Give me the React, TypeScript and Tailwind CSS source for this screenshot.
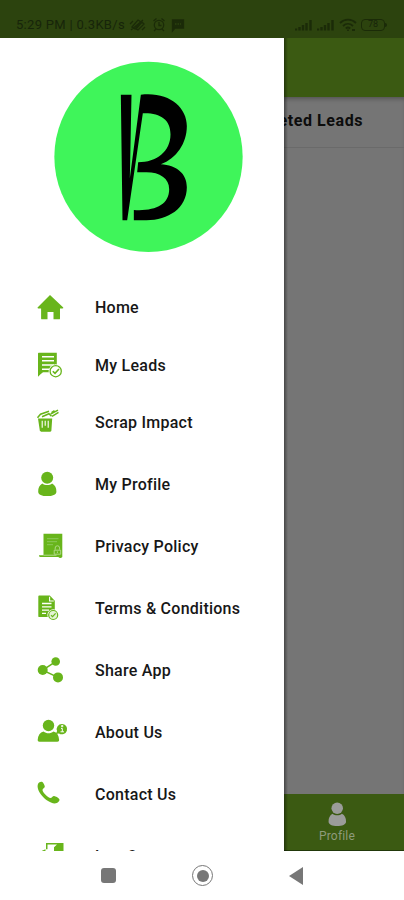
import type { ReactNode } from "react";

interface MenuItem {
  label: string;
  row: string;
  icon: ReactNode;
}

function Glyph({ children }: { children: ReactNode }) {
  return (
    <svg viewBox="0 0.8 40 40" className="size-10 shrink-0" fill="#68b51b">
      {children}
    </svg>
  );
}

const menu: MenuItem[] = [
  {
    label: "Home",
    row: "h-[58px]",
    icon: (
      <Glyph>
        <path d="M20 7.8 33 20c.6.8.2 1.2-.5 1.2H30v10c0 .6-.3.9-.9.9h-5.6v-7.4h-6v7.4H12c-.6 0-.9-.3-.9-.9v-10H8.400c-.9 0-1.200-.6-.6-1.200Z" />
      </Glyph>
    ),
  },
  {
    label: "My Leads",
    row: "h-[57px]",
    icon: (
      <Glyph>
        <path d="M9 7.500h17.800V27H13l-2.500 2-2.500 2.500V8.500c0-.6.4-1 1-1Z" />
        <path d="M12 11.500h12M12 15.500h12M12 19.700h12M12 24h7" stroke="#fff" strokeWidth="1.500" />
        <circle cx="25.700" cy="26" r="7" fill="#fff" />
        <circle cx="25.700" cy="26" r="5.600" fill="#fff" stroke="#68b51b" strokeWidth="1.300" />
        <path d="m22.800 26 2.200 2.200 4-4.400" fill="none" stroke="#68b51b" strokeWidth="1.600" />
      </Glyph>
    ),
  },
  {
    label: "Scrap Impact",
    row: "h-[58px] mb-0.5",
    icon: (
      <Glyph>
        <path d="M8 16.200h14.200l-.8 12.200c-.1.800-.6 1.200-1.300 1.200h-9c-.8 0-1.200-.4-1.300-1.200Z" />
        <path d="M12.200 18.500v7M15.200 18.500v5M18.200 18.500v7" stroke="#fff" strokeWidth="1.100" />
        <path d="m7.500 15.500 3-3.500 8.500-3M12 14.500l7-3 2.500 2.500" fill="none" stroke="#68b51b" strokeWidth="1.500" />
        <path d="m20.500 12 7.500-4M22 14.200l6.500-4M21.500 10.500l3-2" stroke="#68b51b" strokeWidth="1.500" />
      </Glyph>
    ),
  },
  {
    label: "My Profile",
    row: "h-[62px]",
    icon: (
      <Glyph>
        <circle cx="17.200" cy="13.500" r="6" />
        <path d="M12.300 19.300c2.600 2.100 7.200 2.100 9.800 0 3 1.500 4.400 4.500 4.300 8.200 0 3-4 4.400-9.200 4.400S8.200 30.500 8.200 27.500c-.1-3.700 1.300-6.700 4.100-8.200Z" />
      </Glyph>
    ),
  },
  {
    label: "Privacy Policy",
    row: "h-[62px]",
    icon: (
      <Glyph>
        <path d="M13.500 7.500h18.800v23.300c-1 1.200-3 1.200-4 0H10.500c-1 0-1.500-.6-1.500-1.800h4.500Z" />
        <path d="M17 12.500h11.500M17 15.500h10M17 18.500h6" stroke="#8dc95a" strokeWidth="1" />
        <path d="M13.500 29h13" stroke="#c5e5a6" strokeWidth=".8" />
        <path d="M25.200 23.500v-1.700a2.200 2.200 0 0 1 4.400 0v1.700M24.200 24h6.500v4h-6.500ZM27.400 25.200v1.600" fill="none" stroke="#b4db8f" strokeWidth=".9" />
      </Glyph>
    ),
  },
  {
    label: "Terms & Conditions",
    row: "h-[62px]",
    icon: (
      <Glyph>
        <path d="M9.500 7.300h10.300l5 5.200v16.400H9.500c-.8 0-1.200-.4-1.200-1.200V8.500c0-.8.400-1.200 1.200-1.200Z" />
        <path d="M19.600 8.500v4.300h4.200" fill="none" stroke="#fff" strokeWidth="1.100" />
        <path d="M12 15.300h9.500M12 18.600h9.500M12 22h7M12 25.200h4" stroke="#fff" strokeWidth="1.300" />
        <circle cx="23.200" cy="26.800" r="5.800" fill="#fff" />
        <circle cx="23.200" cy="26.800" r="4.500" fill="#e3f3d4" stroke="#68b51b" strokeWidth="1.200" />
        <path d="m21 27 1.600 1.500 3-3.300" fill="none" stroke="#68b51b" strokeWidth="1.200" />
      </Glyph>
    ),
  },
  {
    label: "Share App",
    row: "h-[62px]",
    icon: (
      <Glyph>
        <path d="M25.700 11.500 12.700 20 28 27.200" fill="none" stroke="#68b51b" strokeWidth="1.600" />
        <circle cx="25.700" cy="11.300" r="4.300" />
        <circle cx="12.700" cy="19.800" r="5" />
        <circle cx="28" cy="27.200" r="5" />
      </Glyph>
    ),
  },
  {
    label: "About Us",
    row: "h-[62px]",
    icon: (
      <Glyph>
        <circle cx="18.500" cy="13.300" r="5.700" />
        <path d="M13.500 19.300c3 2.400 7 2.400 10 0 3.500 1 5.300 3.700 5.600 8.200.1 1.300-.5 2-1.800 2H9.500c-1.300 0-1.900-.7-1.800-2 .3-4.500 2.300-7.200 5.800-8.200Z" />
        <path d="M32 11.700a5.200 5.200 0 1 1-3 9.500l-3.200.7 1.300-3A5.200 5.200 0 0 1 32 11.700Z" />
        <path d="M31 16.200h1.300v3.300M30.500 19.600h3.500M31.600 13.300h1.200v1.200h-1.200Z" fill="none" stroke="#fff" strokeWidth="1" />
      </Glyph>
    ),
  },
  {
    label: "Contact Us",
    row: "h-[62px]",
    icon: (
      <Glyph>
        <path d="M8.800 8.600c1-.9 2.700-1.400 3.600-.8.900.7 2.200 3 2.400 4.600.1 1.300-2.300 2-2.300 3.400 0 2.200 5.500 7.900 8 8 1.400 0 2.200-2.200 3.600-2 1.700.2 4.100 1.800 5.100 2.900 1 1.300-.8 3.400-2.400 4.100-2.300 1.100-6 .1-10-2.700-4.500-3.200-8-8-8.900-11.700-.6-2.400-.3-4.700.9-5.800Z" />
      </Glyph>
    ),
  },
  {
    label: "Log Out",
    row: "h-[62px]",
    icon: (
      <Glyph>
        <path d="M16 6.800h17.500v22.700h-8.500v2h-1V11l3-2.700h-9.500V13H16Z" />
        <path d="M12 14.500 15.500 13v3H22v4h-6.500v3L10 18Z" />
      </Glyph>
    ),
  },
];

function Logo() {
  return (
    <svg viewBox="43 33 566 573" className="mt-[23px] ml-[54px] h-[191px] w-[189px] shrink-0">
      <ellipse cx="326" cy="320.500" rx="282.500" ry="285.500" fill="#3ff55a" />
      <path d="M243 134H275L270 385 303 134C385 124 441 170 441 228 441 280 410 325 363 343 410 346 441 370 441 412 441 475 385 511 320 511H282V480C345 484 388 465 388 418 388 385 360 367 320 367H292L295 337C350 337 392 305 392 253 392 208 360 188 309 190L262 511H248Z" />
    </svg>
  );
}

function SignalBars() {
  return (
    <svg viewBox="0 0 18 12" className="h-3 w-[18px]" stroke="#1b2b08" strokeWidth="2.400">
      <path d="M1 11.500V9.500M4.500 11.500V8M8 11.500V6M11.500 11.500V4M15.500 11.500V1" />
    </svg>
  );
}

function StatusBar() {
  return (
    <div className="flex h-[38px] items-center bg-[#2c430e] pt-3 pr-[17px] pl-4 text-[#17250a]">
      <span className="w-[111px] text-[13px] tracking-[0.3px] whitespace-nowrap">5:29 PM | 0.3KB/s</span>
      <svg viewBox="0 0 60 16" className="ml-[2px] h-4 w-[60px]" fill="none" stroke="#1b2b08" strokeWidth="1.300">
        <path d="m3 10 6-7 3 2-6 7ZM7 12l6-7 2 2-6 6ZM1 7l3-3M13 13l3-3M2 13 14 3" />
        <circle cx="30" cy="8" r="4.700" />
        <path d="M30 5v3.500h2.500M24.500 4l3-2.500M35.500 4l-3-2.500M27 12l-2 2M33 12l2 2" />
        <path d="M43.500 3h11v8h-8.500l-2.500 3Z" fill="#1b2b08" />
        <path d="M46 7h6" stroke="#2c430e" strokeDasharray="1.500 1" />
      </svg>
      <div className="ml-auto flex items-center gap-1">
        <SignalBars />
        <SignalBars />
        <svg viewBox="0 0 18 14" className="h-3.5 w-[18px]" fill="none" stroke="#1b2b08" strokeWidth="1.800">
          <path d="M1 5c4.500-4.500 11.500-4.500 16 0M4 8c3-2.800 7-2.800 10 0M6.800 10.500c1.300-1.200 3-1.200 4.400 0M9 11.500v1.500M13 12h3" />
        </svg>
        <div className="flex items-center">
          <span className="flex h-3 w-6 items-center justify-center rounded-[4px] border border-[#1b2b08] text-[9px]">
            78
          </span>
          <span className="h-1 w-0.5 rounded-r bg-[#1b2b08]" />
        </div>
      </div>
    </div>
  );
}

function Drawer() {
  return (
    <aside className="absolute top-[38px] left-0 flex h-[813px] w-[284px] flex-col overflow-hidden bg-white">
      <Logo />
      <nav className="mt-[27px] flex flex-col">
        {menu.map(({ label, row, icon }) => (
          <a
            key={label}
            href="#"
            className={`flex shrink-0 items-center gap-[25px] pl-[30px] text-[16px] font-medium tracking-[0.25px] whitespace-nowrap text-[#171717] ${row}`}
          >
            {icon}
            {label}
          </a>
        ))}
      </nav>
    </aside>
  );
}

export default function App() {
  return (
    <div className="relative flex h-[900px] w-[404px] flex-col overflow-hidden bg-white font-[Roboto,sans-serif]">
      <StatusBar />
      <header className="h-[59px] bg-[#3b5a12]" />
      <main className="flex flex-1 flex-col bg-[#757575] shadow-[inset_0_4px_4px_-2px_#555]">
        <div className="flex h-[51px] justify-end border-b border-[#6a6a6a]">
          <span className="w-[202px] pt-3 pr-3.5 text-center text-[16px] font-bold tracking-[0.6px] text-[#0c0c0c]">
            Completed Leads
          </span>
        </div>
      </main>
      <footer className="flex h-[57px] justify-end border-b border-[#21380a] bg-[#3b5a12]">
        <div className="flex w-[134px] flex-col items-center pt-2 text-[12px] leading-[14px] tracking-[0.2px] text-[#8e9b7b]">
          <svg viewBox="8 7 19 25" className="mb-[3px] h-6 w-[19px]" fill="#9b9c9a">
            <circle cx="17.200" cy="13.500" r="6" />
            <path d="M12.300 19.300c2.600 2.100 7.200 2.100 9.800 0 3 1.500 4.400 4.500 4.300 8.200 0 3-4 4.400-9.200 4.400S8.200 30.500 8.200 27.500c-.1-3.700 1.300-6.700 4.100-8.200Z" />
          </svg>
          Profile
        </div>
      </footer>
      <div className="flex h-[49px] items-center bg-white pl-[101px]">
        <span className="size-[15px] rounded-[3px] bg-[#777]" />
        <span className="ml-[76px] flex size-[21px] items-center justify-center rounded-full border-[1.500px] border-[#777]">
          <span className="size-3 rounded-full bg-[#777]" />
        </span>
        <svg viewBox="0 0 14 18" className="ml-[76px] h-[18px] w-3.5" fill="#777">
          <path d="M14 0v18L0 9Z" />
        </svg>
      </div>
      <Drawer />
      {/* shade cast by the drawer's right edge */}
      <div className="absolute top-[38px] left-[284px] h-[813px] w-1 bg-gradient-to-r from-black/40 to-transparent" />
    </div>
  );
}
